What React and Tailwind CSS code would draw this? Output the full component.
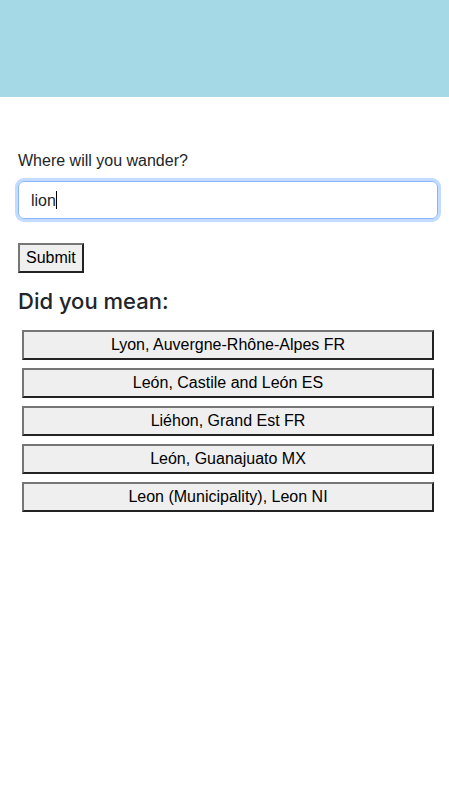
export default function App() {
  const places = [
    'Lyon, Auvergne-Rhône-Alpes FR',
    'León, Castile and León ES',
    'Liéhon, Grand Est FR',
    'León, Guanajuato MX',
    'Leon (Municipality), Leon NI',
  ]

  return (
    <div className="bg-white font-['Liberation_Sans',Arial,sans-serif] text-[#212529]">
      <header className="h-[97px] bg-[#a4d9e5]" />

      <main className="pl-[18px] pr-[11px] pt-[52px] pb-10">
        <label className="mb-2 block text-base leading-6">Where will you wander?</label>
        <div className="h-[38px] rounded-md border border-[#86b7fe] px-3 py-[6px] text-base leading-6 text-[#212529] shadow-[0_0_0_3px_rgba(13,110,253,0.25)]">
          lion<span className="inline-block h-[18px] w-px translate-y-[3px] bg-black" />
        </div>

        <button className="mt-6 h-[30px] border-2 border-t-[#767676] border-l-[#767676] border-b-[#222] border-r-[#222] bg-[#efefef] px-[6px] text-base leading-5 text-black">
          Submit
        </button>

        <h4 className="mt-[14px] font-['Inter',sans-serif] text-[22px] leading-[1.3] font-medium">Did you mean:</h4>

        <ul className="mt-[14px] flex flex-col gap-2 px-1">
          {places.map((p) => (
            <li key={p}>
              <button className="h-[30px] w-full border-2 border-t-[#767676] border-l-[#767676] border-b-[#222] border-r-[#222] bg-[#efefef] text-base leading-5 text-black">
                {p}
              </button>
            </li>
          ))}
        </ul>
      </main>
    </div>
  )
}
